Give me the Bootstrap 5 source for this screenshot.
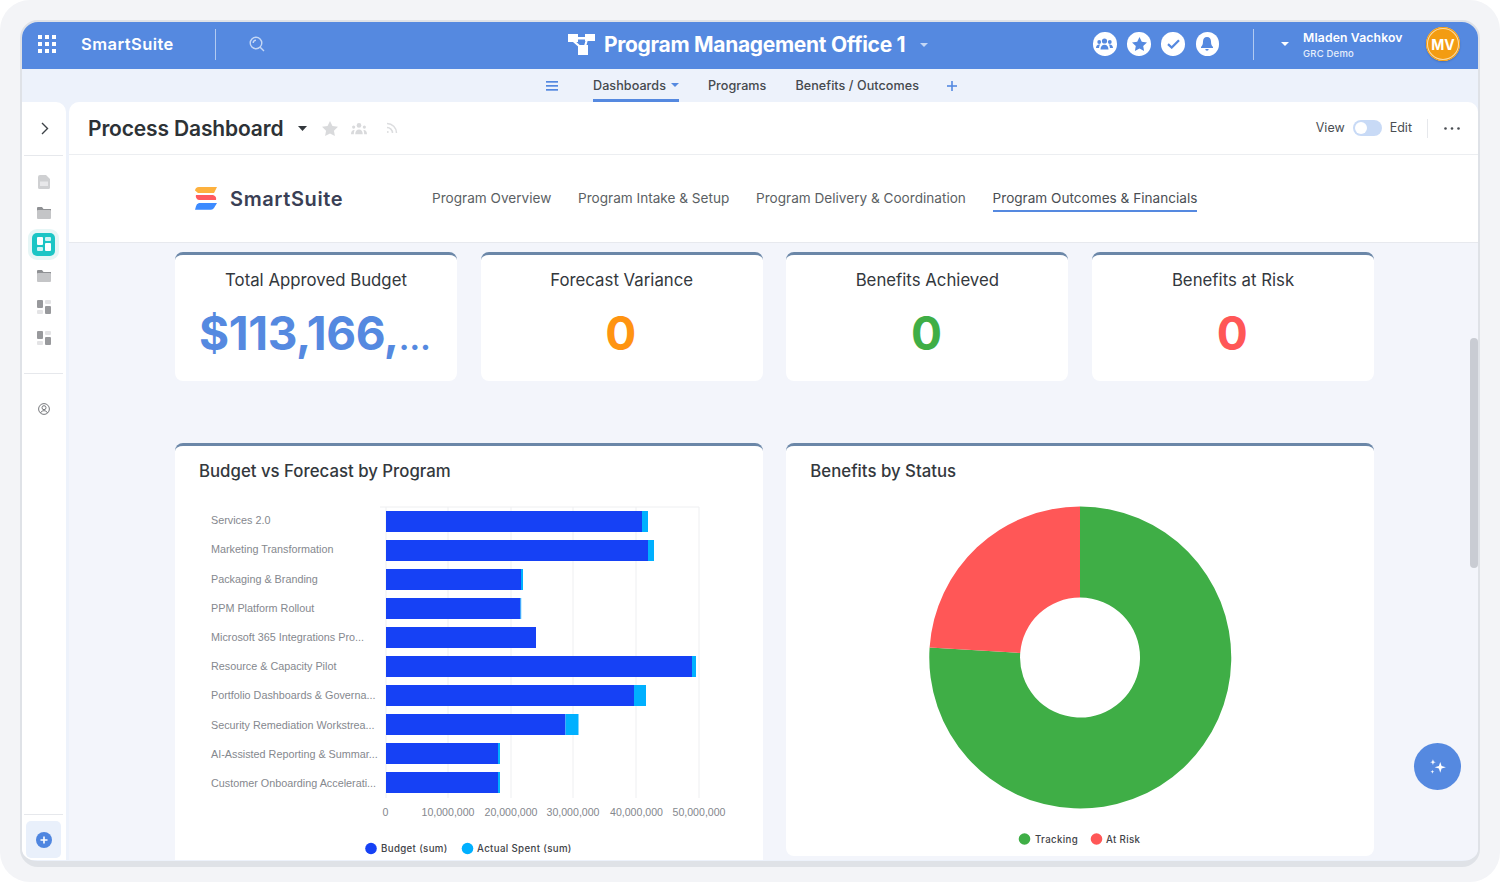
<!DOCTYPE html>
<html lang="en">
<head>
<meta charset="utf-8">
<title>Process Dashboard</title>
<link rel="stylesheet" href="https://cdn.jsdelivr.net/npm/bootstrap@5.3.0/dist/css/bootstrap.min.css">
<style>
html,body{height:882px;overflow:hidden;background:#fff;font-family:Inter,"Liberation Sans",sans-serif;color:#33383d}
.frame{height:882px;background:#f3f4f7;border-radius:30px;padding:20px 20px 15px}
.shell{height:847px;border:2px solid #dfe2e7;border-bottom-width:6px;border-radius:18px;overflow:hidden;background:#edf2fb}
.topbar{height:47px;background:#5589e0;color:#fff;position:relative;padding:0 0 3px}
.brand-text{font-size:16.5px;font-weight:600;letter-spacing:.45px;margin-left:25px;width:134px}
.vline{width:1px;height:31px;background:rgba(255,255,255,.55)}
.app-title{font-size:21px;font-weight:700;letter-spacing:-.3px;color:#fff;margin-left:9px}
.center-title{position:absolute;left:546px;top:0;height:45px}
.round-ic{width:23.5px;height:23.5px;border-radius:50%;background:#fff}
.user-block{margin-left:14px;width:123px;padding-top:2px}
.user-name{font-size:12.2px;font-weight:600;line-height:15px;letter-spacing:.15px}
.user-org{font-size:9.5px;font-weight:500;line-height:13px;letter-spacing:.2px;color:#e6eefb;margin-top:2px}
.avatar{width:34px;height:34px;border-radius:50%;background:#f39c12;font-size:14px;font-weight:700;box-shadow:inset 0 0 0 1px #f39c12,inset 0 0 0 2px #fbdca8,0 1px 2px rgba(0,0,0,.2);color:#fff;margin-right:18px}
.subnav{height:33px;background:#edf2fb;padding-left:524px}
.tab-link{height:33px;font-size:12.6px;font-weight:500;letter-spacing:.05px;color:#45494e;line-height:33px;position:relative}
.tab-on{border-bottom:3px solid #5589e0}
.workspace{height:758px}
.rail{width:44px;background:#fff;border-top-right-radius:10px;flex:none;padding-right:1px}
.rail-slot{height:31.3px}
.rail-rule{height:1px;background:#e6e8ec;margin:0 2px 0 2px}
.tile-on{width:31px;height:31px;border-radius:9px;background:#e6f6f6}
.tile-in{width:23px;height:23px;border-radius:5px;background:#1cc5c5}
.add-tile{width:35px;height:37px;border-radius:5px;background:#e9f0fb;margin:6px 0 2px 4px}
.pane{margin-left:3px;min-width:0;flex:1;background:#f3f5fb;border-top-left-radius:10px;border-top-right-radius:10px;overflow:hidden;position:relative}
.head-row{height:53px;background:#fff;border-bottom:1px solid #eceef1;padding:0 18px 0 19px}
.page-title{font-size:21px;font-weight:600;letter-spacing:-.15px;color:#2d3236;margin:1px 15px 0 0}
.small-txt{font-size:12.5px;color:#4a4e53}
.switcher{width:29px;height:16px;border-radius:8px;background:#c8daf6;padding:2px}
.knob{width:12px;height:12px;border-radius:50%;background:#fff}
.head-rule{width:1px;height:19px;background:#e6e8ec}
.dash-nav{height:88px;background:#fff;border-bottom:1px solid #e7e9ee;padding-left:126px}
.dash-brand{font-size:20px;font-weight:600;letter-spacing:.62px;color:#3a3f55;width:202px;margin-left:13px}
.dash-link{font-size:13.6px;color:#5b5f64;line-height:20px;margin:3px 26.7px 0 0;padding-bottom:2px;border-bottom:2px solid transparent}
.dash-on{color:#4a4e53;border-bottom-color:#5589e0;margin-right:0}
.stage{padding:9px 104px 0 106px}
.stage .row{--bs-gutter-x:23.7px}
.kpi-box{height:129px;background:#fff;border-radius:8px;border:0;border-top:3px solid #6b87a8;text-align:center}
.kpi-label{font-size:16.8px;font-weight:400;color:#33383d;line-height:22px;padding-top:14px}
.kpi-num{font-size:46px;font-weight:650;line-height:56px;margin-top:14px;letter-spacing:-.4px;padding-right:2px}
.ell-tail{font-size:32px;letter-spacing:0}
.chart-row{margin-top:62px}
.chart-box{background:#fff;border-radius:8px;border:0;border-top:3px solid #6b87a8;overflow:hidden;display:block}
.chart-left{height:430px}
.chart-right{height:413px}
.chart-name{font-size:16.8px;font-weight:500;color:#33383d;margin:0;padding:14px 0 0 24px;height:44px;line-height:22px}
.chart-box svg{display:block}
.axis-t{font-family:"Liberation Sans",sans-serif;font-size:10.8px;fill:#85888e}
.tick-t{font-family:"Liberation Sans",sans-serif;font-size:10.6px;fill:#85888e}
.leg-t{font-size:9.7px;font-weight:500;fill:#3f4348;letter-spacing:.35px}
.scroll-thumb{position:absolute;right:0;top:236px;width:8px;height:230px;background:#c9ccd3;border-radius:4px}
.fab{position:absolute;right:17px;top:641px;width:47px;height:47px;border-radius:50%;background:#5589e0}
</style>
</head>
<body>
<div class="frame">
<div class="shell d-flex flex-column">

<nav class="navbar topbar flex-nowrap justify-content-start">
  <div class="d-flex align-items-center" style="padding-left:16px">
    <svg width="18" height="18" viewBox="0 0 18 18" fill="#fff"><rect x="0" y="0" width="4" height="4"/><rect x="7" y="0" width="4" height="4"/><rect x="14" y="0" width="4" height="4"/><rect x="0" y="7" width="4" height="4"/><rect x="7" y="7" width="4" height="4"/><rect x="14" y="7" width="4" height="4"/><rect x="0" y="14" width="4" height="4"/><rect x="7" y="14" width="4" height="4"/><rect x="14" y="14" width="4" height="4"/></svg>
    <span class="brand-text">SmartSuite</span>
    <span class="vline"></span>
    <svg style="margin-left:33px" width="16" height="16" viewBox="0 0 16 16" fill="none" stroke="#c4d7f5" stroke-width="1.4"><circle cx="7" cy="7" r="5.8"/><path d="M11.2 11.2 15 15M4.200 7a2.800 2.800 0 0 1 2.800-2.800"/></svg>
  </div>
  <div class="center-title d-flex align-items-center">
    <svg width="27" height="21" viewBox="0 0 27 21" fill="#fff"><rect x="0" y="0" width="10" height="8"/><rect x="17" y="0" width="10" height="7"/><rect x="10" y="11" width="10" height="10"/><path d="M9 3h9v2.400H9zM6 6l8 7-1.600 1.600-8-7zM18 5h2.200l-2 7h-2.200z"/></svg>
    <span class="app-title">Program Management Office 1</span>
    <svg style="margin-left:15px" width="8" height="4" viewBox="0 0 8 4" fill="#c4d7f5"><path d="M0 0h8L4 4z"/></svg>
  </div>
  <div class="d-flex align-items-center ms-auto">
    <div class="d-flex align-items-center" style="gap:10.6px;margin-right:34px">
      <span class="round-ic d-flex align-items-center justify-content-center"><svg width="17" height="12" viewBox="0 0 17 12" fill="#5589e0"><circle cx="8.500" cy="3" r="2.600"/><circle cx="3.200" cy="4" r="1.900"/><circle cx="13.800" cy="4" r="1.900"/><path d="M4.500 11.500c0-3 1.600-4.800 4-4.800s4 1.800 4 4.800zM0 10c0-2 1.200-3.600 3.300-3.600.5 0 .8.100 1 .2C3.400 7.700 3.100 8.900 3.100 10zM17 10c0-2-1.200-3.600-3.300-3.600-.5 0-.8.100-1 .2.900 1.100 1.200 2.300 1.200 3.400z"/></svg></span>
      <span class="round-ic d-flex align-items-center justify-content-center"><svg width="15" height="14" viewBox="0 0 15 14" fill="#5589e0"><path d="M7.500 0 9.800 4.700 15 5.400 11.200 9l.9 5-4.600-2.400L2.900 14l.9-5L0 5.400l5.200-.7z"/></svg></span>
      <span class="round-ic d-flex align-items-center justify-content-center"><svg width="13" height="10" viewBox="0 0 13 10" fill="none" stroke="#5589e0" stroke-width="2.300"><path d="M1 5.200 4.700 8.500 12 1.300"/></svg></span>
      <span class="round-ic d-flex align-items-center justify-content-center"><svg width="12" height="14" viewBox="0 0 12 14" fill="#5589e0"><path d="M6 0c2.600 0 4 2 4 4.500 0 3 .8 4.300 2 5.500v1H0v-1c1.200-1.200 2-2.500 2-5.500C2 2 3.400 0 6 0zM4.300 12h3.400a1.700 1.700 0 0 1-3.400 0z"/></svg></span>
    </div>
    <span class="vline"></span>
    <svg style="margin-left:27px" width="8" height="4" viewBox="0 0 8 4" fill="#fff"><path d="M0 0h8L4 4z"/></svg>
    <div class="user-block"><div class="user-name">Mladen Vachkov</div><div class="user-org">GRC Demo</div></div>
    <span class="avatar d-flex align-items-center justify-content-center">MV</span>
  </div>
</nav>

<div class="subnav d-flex align-items-start">
  <svg style="margin-top:12px" width="12" height="10" viewBox="0 0 12 10" fill="#5589e0"><rect width="12" height="1.700"/><rect y="4" width="12" height="1.700"/><rect y="8" width="12" height="1.700"/></svg>
  <a class="tab-link tab-on text-decoration-none d-flex align-items-start" style="margin-left:35px" href="#">Dashboards<svg style="margin:14px 0 0 5px" width="8" height="4" viewBox="0 0 8 4" fill="#5589e0"><path d="M0 0h8L4 4z"/></svg></a>
  <a class="tab-link text-decoration-none" style="margin-left:29px" href="#">Programs</a>
  <a class="tab-link text-decoration-none" style="margin-left:29px" href="#">Benefits / Outcomes</a>
  <svg style="margin:12px 0 0 28px" width="10" height="10" viewBox="0 0 10 10" fill="#5589e0"><rect x="4.200" width="1.600" height="10"/><rect y="4.200" width="10" height="1.600"/></svg>
</div>

<div class="workspace d-flex">
  <aside class="rail d-flex flex-column">
    <div class="d-flex align-items-center justify-content-center" style="height:53px;margin-left:3px"><svg width="8" height="13" viewBox="0 0 8 13" fill="none" stroke="#3d4247" stroke-width="1.400"><path d="M1 1l5.500 5.500L1 12"/></svg></div>
    <div class="rail-rule"></div>
    <div style="height:10px"></div>
    <div class="rail-slot d-flex align-items-center justify-content-center"><svg width="12" height="14" viewBox="0 0 12 14"><path d="M2 0h6l4 4v8.500a1.500 1.500 0 0 1-1.500 1.500h-9A1.500 1.500 0 0 1 0 12.500V2a2 2 0 0 1 2-2z" fill="#cfd0d2"/><rect x="2" y="6.500" width="8" height="4.500" fill="#e8e8ea"/></svg></div>
    <div class="rail-slot d-flex align-items-center justify-content-center"><svg width="14" height="12" viewBox="0 0 14 12"><path d="M0 1a1 1 0 0 1 1-1h4l1.500 2H14v2H0z" fill="#8f9194"/><rect y="3" width="14" height="9" rx="1" fill="#c4c5c7"/></svg></div>
    <div class="rail-slot d-flex align-items-center justify-content-center"><span class="tile-on d-flex align-items-center justify-content-center"><span class="tile-in d-flex align-items-center justify-content-center"><svg width="14" height="14" viewBox="0 0 14 14" fill="#fff"><rect width="6" height="8" rx="1"/><rect x="8" width="6" height="4" rx="1" opacity=".8"/><rect y="10" width="6" height="4" rx="1" opacity=".8"/><rect x="8" y="6" width="6" height="8" rx="1"/></svg></span></span></div>
    <div class="rail-slot d-flex align-items-center justify-content-center"><svg width="14" height="12" viewBox="0 0 14 12"><path d="M0 1a1 1 0 0 1 1-1h4l1.500 2H14v2H0z" fill="#8f9194"/><rect y="3" width="14" height="9" rx="1" fill="#c4c5c7"/></svg></div>
    <div class="rail-slot d-flex align-items-center justify-content-center"><svg width="14" height="14" viewBox="0 0 14 14"><rect width="6" height="8" rx="1" fill="#98999c"/><rect x="8" width="6" height="4" rx="1" fill="#e3e3e5"/><rect y="10" width="6" height="4" rx="1" fill="#e3e3e5"/><rect x="8" y="6" width="6" height="8" rx="1" fill="#98999c"/></svg></div>
    <div class="rail-slot d-flex align-items-center justify-content-center"><svg width="14" height="14" viewBox="0 0 14 14"><rect width="6" height="8" rx="1" fill="#98999c"/><rect x="8" width="6" height="4" rx="1" fill="#e3e3e5"/><rect y="10" width="6" height="4" rx="1" fill="#e3e3e5"/><rect x="8" y="6" width="6" height="8" rx="1" fill="#98999c"/></svg></div>
    <div style="height:19px"></div>
    <div class="rail-rule"></div>
    <div class="d-flex align-items-center justify-content-center" style="height:71px"><svg width="12" height="12" viewBox="0 0 12 12" fill="none" stroke="#77797d" stroke-width="1"><circle cx="6" cy="6" r="5.400"/><circle cx="6" cy="4.700" r="2"/><path d="M2.500 10c.6-1.600 2-2.300 3.500-2.300S8.900 8.400 9.500 10"/></svg></div>
    <div class="mt-auto">
      <div class="rail-rule"></div>
      <div class="add-tile d-flex align-items-center justify-content-center"><svg width="16" height="16" viewBox="0 0 16 16"><circle cx="8" cy="8" r="8" fill="#4f86e0"/><path d="M8 4.500v7M4.500 8h7" stroke="#fff" stroke-width="1.600"/></svg></div>
    </div>
  </aside>

  <main class="pane">
    <div class="head-row d-flex align-items-center">
      <h1 class="page-title">Process Dashboard</h1>
      <svg width="9" height="5" viewBox="0 0 9 5" fill="#33383d"><path d="M0 0h9L4.500 5z"/></svg>
      <svg style="margin-left:15px" width="16" height="15" viewBox="0 0 15 14" fill="#d9dadc"><path d="M7.500 0 9.800 4.700 15 5.400 11.200 9l.9 5-4.600-2.400L2.900 14l.9-5L0 5.400l5.200-.7z"/></svg>
      <svg style="margin-left:13px" width="16" height="13" viewBox="0 0 17 12" fill="#d9dadc"><circle cx="8.500" cy="2.700" r="2.500"/><circle cx="2.800" cy="4.500" r="1.700"/><circle cx="14.200" cy="4.500" r="1.700"/><path d="M4.500 12c0-3 1.600-5 4-5s4 2 4 5zM0 12c0-2 .8-4.500 3-4.500.3 0 .5 0 .8.100C3.200 9 3 10.500 3 12zM17 12c0-2-.8-4.500-3-4.500-.3 0-.5 0-.8.100.6 1.400.8 2.900.8 4.400z"/></svg>
      <svg style="margin-left:19px" width="12" height="12" viewBox="0 0 12 12" fill="none" stroke="#dcdddf" stroke-width="1.500"><path d="M1 5.500A5.500 5.500 0 0 1 6.500 11M1 1.500A9.500 9.500 0 0 1 10.500 11"/><circle cx="1.800" cy="10" r=".9" fill="#dcdddf" stroke="none"/></svg>
      <div class="ms-auto d-flex align-items-center">
        <span class="small-txt">View</span>
        <span class="switcher d-flex" style="margin:0 8px 0 8px"><span class="knob"></span></span>
        <span class="small-txt">Edit</span>
        <span class="head-rule" style="margin:0 16px 0 15px"></span>
        <svg width="16" height="3" viewBox="0 0 16 3" fill="#4a4e53"><circle cx="1.500" cy="1.500" r="1.300"/><circle cx="8" cy="1.500" r="1.300"/><circle cx="14.500" cy="1.500" r="1.300"/></svg>
      </div>
    </div>
    <div class="dash-nav d-flex align-items-center">
      <svg width="22" height="23" viewBox="0 0 22 23"><path d="M4 0h18l-3 6H3L0 3.500A4 4 0 0 1 4 0z" fill="#fdb13e"/><path d="M1 8h17a4 4 0 0 1 3 5H4a4 4 0 0 1-3-5z" fill="#ff5a5f"/><path d="M4 16h18l-3 5a4 4 0 0 1-3 1.800H0l1-3.500A4 4 0 0 1 4 16z" fill="#3d8bff"/></svg>
      <span class="dash-brand">SmartSuite</span>
      <a class="dash-link text-decoration-none" href="#">Program Overview</a>
      <a class="dash-link text-decoration-none" href="#">Program Intake &amp; Setup</a>
      <a class="dash-link text-decoration-none" href="#">Program Delivery &amp; Coordination</a>
      <a class="dash-link dash-on text-decoration-none" href="#">Program Outcomes &amp; Financials</a>
    </div>
    <div class="stage">
      <div class="row">
        <div class="col-3"><div class="card kpi-box"><div class="kpi-label">Total Approved Budget</div><div class="kpi-num" style="color:#5589e0">$113,166,<span class="ell-tail">…</span></div></div></div>
        <div class="col-3"><div class="card kpi-box"><div class="kpi-label">Forecast Variance</div><div class="kpi-num" style="color:#ff9411">0</div></div></div>
        <div class="col-3"><div class="card kpi-box"><div class="kpi-label">Benefits Achieved</div><div class="kpi-num" style="color:#3fae46">0</div></div></div>
        <div class="col-3"><div class="card kpi-box"><div class="kpi-label">Benefits at Risk</div><div class="kpi-num" style="color:#ff5757">0</div></div></div>
      </div>
      <div class="row chart-row">
        <div class="col-6">
          <div class="card chart-box chart-left">
            <h2 class="chart-name">Budget vs Forecast by Program</h2>
            <svg width="588" height="383" viewBox="175 490 588 383">
              <g stroke="#eeeff1" stroke-width="1"><path d="M386 507V798M448 507V798M511 507V798M573 507V798M636 507V798M699 507V798M380 507H699"/></g>
              <g fill="#1641f5">
                <rect x="386" y="511" width="256" height="21"/><rect x="386" y="540" width="262" height="21"/><rect x="386" y="569" width="135" height="21"/><rect x="386" y="598" width="134.500" height="21"/><rect x="386" y="627" width="150" height="21"/><rect x="386" y="656" width="306" height="21"/><rect x="386" y="685" width="248" height="21"/><rect x="386" y="714" width="179.500" height="21"/><rect x="386" y="743" width="112" height="21"/><rect x="386" y="772" width="112" height="21"/>
              </g>
              <g fill="#00b0ff">
                <rect x="642" y="511" width="6" height="21"/><rect x="648" y="540" width="6" height="21"/><rect x="521" y="569" width="2" height="21"/><rect x="520.500" y="598" width=".7" height="21"/><rect x="692" y="656" width="4" height="21"/><rect x="634" y="685" width="12" height="21"/><rect x="565.500" y="714" width="13" height="21"/><rect x="498" y="743" width="2" height="21"/><rect x="498" y="772" width="2" height="21"/>
              </g>
              <g class="axis-t">
                <text x="211" y="524">Services 2.0</text>
                <text x="211" y="553">Marketing Transformation</text>
                <text x="211" y="583">Packaging &amp; Branding</text>
                <text x="211" y="612">PPM Platform Rollout</text>
                <text x="211" y="641">Microsoft 365 Integrations Pro...</text>
                <text x="211" y="670">Resource &amp; Capacity Pilot</text>
                <text x="211" y="699">Portfolio Dashboards &amp; Governa...</text>
                <text x="211" y="729">Security Remediation Workstrea...</text>
                <text x="211" y="758">AI-Assisted Reporting &amp; Summar...</text>
                <text x="211" y="787">Customer Onboarding Accelerati...</text>
              </g>
              <g class="tick-t" text-anchor="middle">
                <text x="385.500" y="816">0</text><text x="448" y="816">10,000,000</text><text x="511" y="816">20,000,000</text><text x="573" y="816">30,000,000</text><text x="636.500" y="816">40,000,000</text><text x="699" y="816">50,000,000</text>
              </g>
              <circle cx="371" cy="848.500" r="5.800" fill="#1641f5"/><text class="leg-t" x="381" y="852">Budget (sum)</text>
              <circle cx="467.500" cy="848.500" r="5.800" fill="#00b0ff"/><text class="leg-t" x="477" y="852">Actual Spent (sum)</text>
            </svg>
          </div>
        </div>
        <div class="col-6">
          <div class="card chart-box chart-right">
            <h2 class="chart-name">Benefits by Status</h2>
            <svg width="588" height="366" viewBox="786 490 588 366">
              <path d="M1080 506.500A151 151 0 1 1 929.600 647.500L1020.200 653A60 60 0 1 0 1080 597.500Z" fill="#3fae46"/>
              <path d="M1080 506.500V597.500A60 60 0 0 0 1020.200 653L929.600 647.500A151 151 0 0 1 1080 506.500Z" fill="#ff5757"/>
              <circle cx="1024.500" cy="839" r="5.800" fill="#3fae46"/><text class="leg-t" x="1035" y="842.500">Tracking</text>
              <circle cx="1096.500" cy="839" r="5.800" fill="#ff5757"/><text class="leg-t" x="1106" y="842.500">At Risk</text>
            </svg>
          </div>
        </div>
      </div>
    </div>
    <div class="scroll-thumb"></div>
    <div class="fab d-flex align-items-center justify-content-center"><svg width="18" height="18" viewBox="0 0 16 16" fill="#fff"><path d="M10 3.500 11.200 7 15 8.200 11.200 9.400 10 13 8.800 9.400 5 8.200 8.800 7zM3.500 1 4.200 3 6 3.700 4.200 4.300 3.500 6.300 2.800 4.300 1 3.700 2.800 3zM3 10.500l.4 1.300 1.300.5-1.300.4L3 14l-.4-1.300-1.300-.4 1.300-.5z"/></svg></div>
  </main>
</div>

</div>
</div>
<script src="https://cdn.jsdelivr.net/npm/bootstrap@5.3.0/dist/js/bootstrap.bundle.min.js"></script>
</body>
</html>
